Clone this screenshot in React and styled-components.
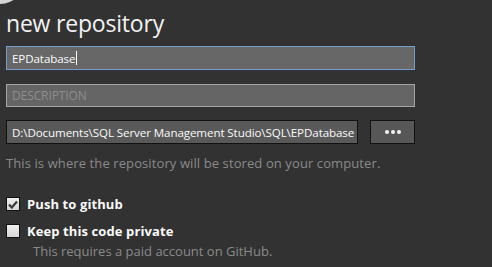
import React from 'react'
import styled, { createGlobalStyle } from 'styled-components'

const GlobalStyle = createGlobalStyle`
  html, body {
    margin: 0;
    padding: 0;
    background: #323232;
  }
  body {
    font-family: 'Open Sans', 'Noto Sans', sans-serif;
    overflow: hidden;
  }
`

const Page = styled.div`
  position: relative;
  width: 492px;
  height: 267px;
  background: #323232;
  padding: 0 6px;
  box-sizing: border-box;
  overflow: hidden;
  color: #fff;
`

const BackButton = styled.div`
  position: absolute;
  left: -27px;
  top: -49px;
  width: 53px;
  height: 53px;
  border-radius: 50%;
  background: #d4d4d4;
`

const Title = styled.h1`
  margin: 0;
  padding-top: 7px;
  font-size: 23px;
  font-weight: 400;
  line-height: 32px;
  color: #f2f2f2;
  letter-spacing: -0.2px;
`

const Form = styled.div`
  display: flex;
  flex-direction: column;
  width: 409px;
  margin-top: 7px;
`

const Field = styled.div`
  box-sizing: border-box;
  height: ${(p) => (p.placeholder ? '23px' : '24px')};
  flex: ${(p) => (p.grow ? '1 1 0' : '0 0 auto')};
  min-width: 0;
  display: flex;
  align-items: center;
  padding: 0 5px;
  font-size: ${(p) => (p.placeholder ? '12px' : '11.6px')};
  letter-spacing: -0.1px;
  white-space: nowrap;
  overflow: hidden;
  background: ${(p) =>
    p.variant === 'path' ? '#595959' : p.variant === 'focus' ? '#676767' : '#656565'};
  border: 1px solid
    ${(p) => (p.variant === 'path' ? '#111' : p.variant === 'focus' ? '#6f9fca' : '#a4a4a4')};
  color: ${(p) => (p.placeholder ? '#8e8e8e' : '#fafafa')};
  margin-bottom: ${(p) => p.gap || 0}px;
`

const Caret = styled.span`
  display: inline-block;
  width: 1px;
  height: 14px;
  background: #fff;
  margin-left: 1px;
`

const PathRow = styled.div`
  display: flex;
  gap: 12px;
`

const BrowseButton = styled.div`
  box-sizing: border-box;
  width: 45px;
  height: 24px;
  background: #575757;
  border: 1px solid #111;
  display: flex;
  align-items: center;
  justify-content: center;
  gap: 2px;
`

const Dot = styled.span`
  width: 4px;
  height: 4px;
  border-radius: 50%;
  background: #f4f4f4;
`

const Hint = styled.div`
  margin-top: 10px;
  font-size: 13px;
  letter-spacing: 0.1px;
  line-height: 18px;
  color: #8a8a8a;
`

const Options = styled.div`
  margin-top: 23px;
  display: flex;
  flex-direction: column;
  gap: 9px;
`

const CheckRow = styled.label`
  display: flex;
  align-items: center;
  gap: 7px;
  font-size: 13px;
  font-weight: 700;
  letter-spacing: 0.1px;
  color: #fafafa;
  line-height: 18px;
`

const Box = styled.span`
  box-sizing: border-box;
  width: 14px;
  height: 14px;
  border: 1px solid #111;
  background: linear-gradient(#f0f0f0, #d6d6d6);
  display: flex;
  align-items: center;
  justify-content: center;
`

const SubHint = styled.div`
  margin-left: 27px;
  margin-top: 2px;
  font-size: 13px;
  line-height: 18px;
  color: #8a8a8a;
`

const Checkbox = ({ checked, children }) => (
  <CheckRow>
    <Box>
      {checked && (
        <svg width="10" height="9" viewBox="0 0 10 9">
          <path d="M1 4.5 L3.8 7.5 L9 1.5" fill="none" stroke="#3a3a3a" strokeWidth="2.2" />
        </svg>
      )}
    </Box>
    {children}
  </CheckRow>
)

export default function App() {
  return (
    <Page>
      <GlobalStyle />
      <BackButton />
      <Title>new repository</Title>
      <Form>
        <Field variant="focus" gap={14}>
          EPDatabase
          <Caret />
        </Field>
        <Field placeholder gap={13}>DESCRIPTION</Field>
        <PathRow>
          <Field variant="path" grow>
            D:\Documents\SQL Server Management Studio\SQL\EPDatabase
          </Field>
          <BrowseButton>
            <Dot />
            <Dot />
            <Dot />
          </BrowseButton>
        </PathRow>
      </Form>
      <Hint>This is where the repository will be stored on your computer.</Hint>
      <Options>
        <Checkbox checked>Push to github</Checkbox>
        <Checkbox>Keep this code private</Checkbox>
      </Options>
      <SubHint>This requires a paid account on GitHub.</SubHint>
    </Page>
  )
}
